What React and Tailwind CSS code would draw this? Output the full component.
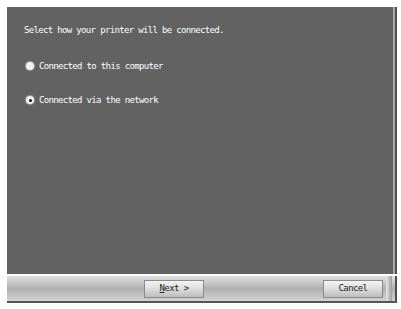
import React from 'react';

const mono = { fontFamily: '"DejaVu Sans Mono", "Liberation Mono", monospace' };

function Radio({ checked }) {
  return (
    <span className="relative flex h-[8px] w-[8px] shrink-0 items-center justify-center rounded-full bg-[#f2f2f2] shadow-[0_0_1px_1px_rgba(255,255,255,0.35)]">
      {checked && <span className="h-[3px] w-[3px] rounded-full bg-[#111]" />}
    </span>
  );
}

function ToolButton({ children }) {
  return (
    <button className="flex h-[18px] w-[60px] items-center justify-center border border-[#8a8a8a] bg-gradient-to-b from-[#f4f4f4] via-[#dcdcdc] to-[#bdbdbd] text-[9px] tracking-[-0.6px] text-[#222]" style={mono}>
      {children}
    </button>
  );
}

export default function App() {
  return (
    <div className="h-[309px] w-[401px] bg-white pl-[7px] pt-[7px]">
      <div className="flex w-[390px] flex-col">
        {/* main panel */}
        <div className="flex h-[267px]">
          <div className="flex flex-1 flex-col bg-[#626262] pl-[17px] pt-[18px] text-white" style={mono}>
            <p className="text-[9px] leading-[10px] tracking-[-0.66px]">Select how your printer will be connected.</p>
            <div className="mt-[26px] flex items-center gap-[5px] pl-[2px]">
              <Radio />
              <span className="text-[9px] leading-[10px] tracking-[-0.66px]">Connected to this computer</span>
            </div>
            <div className="mt-[24px] flex items-center gap-[5px] pl-[2px]">
              <Radio checked />
              <span className="text-[9px] leading-[10px] tracking-[-0.66px]">Connected via the network</span>
            </div>
          </div>
          <div className="w-[2px] bg-[#a9a9a9]" />
          <div className="w-[2px] bg-[#4c4c4c]" />
        </div>
        {/* toolbar */}
        <div className="h-[2px] bg-white" />
        <div className="flex h-[27px] items-center bg-gradient-to-b from-[#e2e2e2] via-[#b0b0b0] to-[#d2d2d2] border-b-2 border-[#555]">
          <div className="ml-[137px]">
            <ToolButton>
              <span><span className="underline">N</span>ext &gt;</span>
            </ToolButton>
          </div>
          <div className="ml-[119px]">
            <ToolButton>Cancel</ToolButton>
          </div>
          <div className="ml-[3px] h-full w-[6px] bg-gradient-to-r from-[#e8e8e8] to-[#9c9c9c]" />
          <div className="ml-auto h-full w-[2px] bg-[#4c4c4c]" />
        </div>
      </div>
    </div>
  );
}
